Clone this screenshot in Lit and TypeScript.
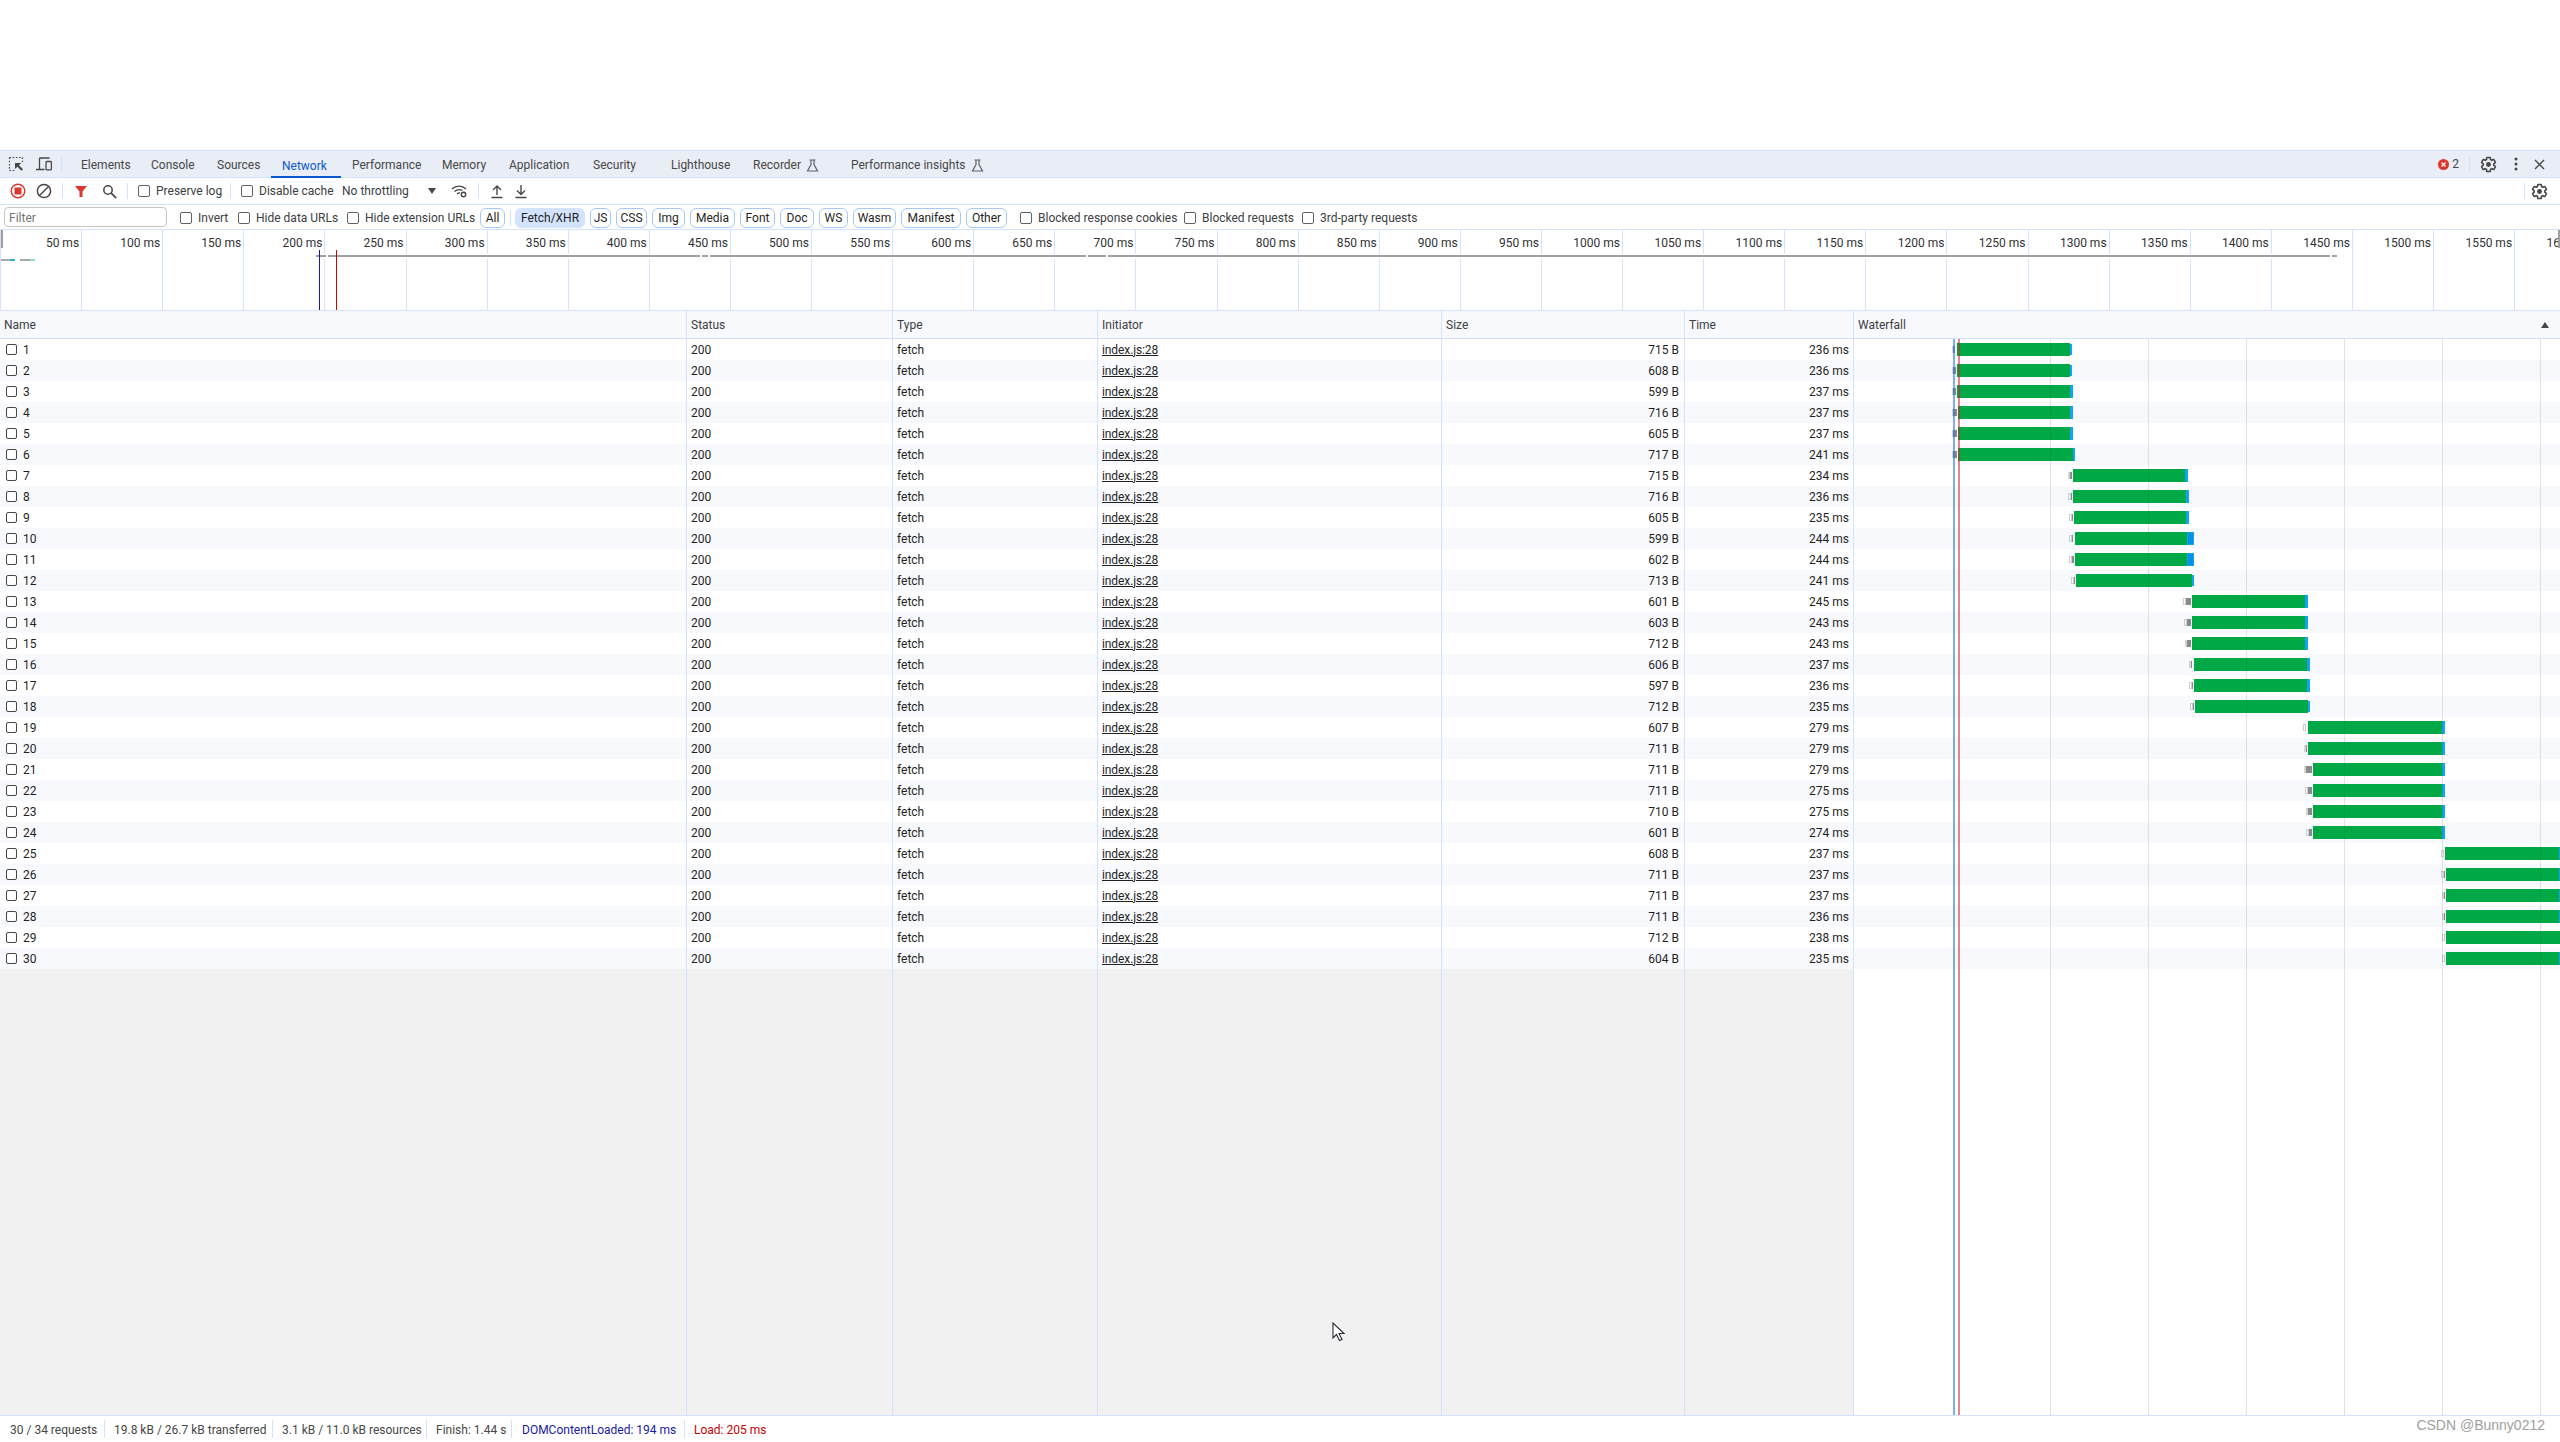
import { LitElement, html, css, svg } from 'lit';
import { customElement } from 'lit/decorators.js';

const WF_LEFT = 1854;

const tabs = [
  { label: 'Elements', w: 70 },
  { label: 'Console', w: 66 },
  { label: 'Sources', w: 65 },
  { label: 'Network', w: 70, active: true },
  { label: 'Performance', w: 90 },
  { label: 'Memory', w: 67 },
  { label: 'Application', w: 84 },
  { label: 'Security', w: 78 },
  { label: 'Lighthouse', w: 82 },
  { label: 'Recorder', w: 98, flask: true },
  { label: 'Performance insights', w: 150, flask: true },
];

const chips = [
  { label: 'JS', w: 21 },
  { label: 'CSS', w: 31 },
  { label: 'Img', w: 33 },
  { label: 'Media', w: 45 },
  { label: 'Font', w: 35 },
  { label: 'Doc', w: 34 },
  { label: 'WS', w: 29 },
  { label: 'Wasm', w: 43 },
  { label: 'Manifest', w: 60 },
  { label: 'Other', w: 41 },
];

const sizes = [715, 608, 599, 716, 605, 717, 715, 716, 605, 599, 602, 713, 601, 603, 712, 606, 597, 712, 607, 711, 711, 711, 710, 601, 608, 711, 711, 711, 712, 604];
const times = [236, 236, 237, 237, 237, 241, 234, 236, 235, 244, 244, 241, 245, 243, 243, 237, 236, 235, 279, 279, 279, 275, 275, 274, 237, 237, 237, 236, 238, 235];

// queue start, dark start, dark end, green start, blue start, end, kind of queue box, flag
type Bar = [number, number, number, number, number, number, 'o' | 's', string?];
const bars: Bar[] = [
  [1952, 1953, 1955, 1957, 2070, 2072, 's', 'inset'],
  [1952, 1953, 1956, 1957, 2070, 2072, 's', 'inset'],
  [1952, 1953, 1956, 1957, 2070, 2073, 's'],
  [1952, 1953, 1957, 1958, 2070, 2073, 's'],
  [1952, 1953, 1957, 1958, 2070, 2073, 's'],
  [1952, 1953, 1957, 1958, 2073, 2075, 's'],
  [2068, 2070, 2072, 2073, 2185, 2188, 's'],
  [2068, 2071, 2072, 2073, 2186, 2189, 'o'],
  [2069, 2072, 2073, 2074, 2186, 2189, 'o'],
  [2069, 2072, 2073, 2075, 2187, 2194, 'o', 'deep'],
  [2069, 2072, 2074, 2075, 2187, 2194, 'o', 'deep'],
  [2071, 2074, 2075, 2076, 2192, 2194, 'o', 'inset'],
  [2183, 2186, 2191, 2192, 2305, 2308, 'o'],
  [2184, 2187, 2191, 2192, 2305, 2308, 'o'],
  [2185, 2187, 2191, 2192, 2305, 2308, 's'],
  [2189, 2191, 2192, 2194, 2307, 2310, 's'],
  [2189, 2192, 2193, 2194, 2307, 2310, 'o'],
  [2190, 2193, 2194, 2195, 2308, 2310, 'o', 'inset'],
  [2303, 2306, 2306, 2308, 2442, 2445, 'o'],
  [2304, 2306, 2307, 2308, 2442, 2445, 's'],
  [2304, 2306, 2312, 2313, 2442, 2445, 's'],
  [2305, 2308, 2312, 2313, 2442, 2445, 'o'],
  [2306, 2308, 2312, 2313, 2442, 2445, 's'],
  [2306, 2309, 2312, 2313, 2442, 2445, 'o'],
  [2441, 2444, 2444, 2445, 2559, 2560, 'o'],
  [2441, 2444, 2445, 2446, 2559, 2560, 'o'],
  [2442, 2444, 2445, 2446, 2559, 2560, 's'],
  [2442, 2444, 2445, 2446, 2559, 2560, 's'],
  [2442, 2445, 2445, 2446, 2560, 2560, 'o'],
  [2442, 2445, 2445, 2446, 2559, 2560, 'o'],
];

const overviewBar = [[316, 326], [328, 700], [702, 708], [710, 1086], [1088, 1106], [1108, 2330], [2332, 2337]];
const overviewTicks = Array.from({ length: 32 }, (_, i) => i + 1);
const waterfallLines = [2050, 2148, 2246, 2344, 2442, 2540];

const gearPath = 'M19.43 12.98c.04-.32.07-.64.07-.98s-.03-.66-.07-.98l2.11-1.65c.19-.15.24-.42.12-.64l-2-3.46c-.12-.22-.39-.3-.61-.22l-2.49 1c-.52-.4-1.08-.73-1.69-.98l-.38-2.65C14.46 2.18 14.25 2 14 2h-4c-.25 0-.46.18-.49.42l-.38 2.65c-.61.25-1.17.59-1.69.98l-2.49-1c-.23-.09-.49 0-.61.22l-2 3.46c-.13.22-.07.49.12.64l2.11 1.65c-.04.32-.07.65-.07.98s.03.66.07.98l-2.11 1.65c-.19.15-.24.42-.12.64l2 3.46c.12.22.39.3.61.22l2.49-1c.52.4 1.08.73 1.69.98l.38 2.65c.03.24.24.42.49.42h4c.25 0 .46-.18.49-.42l.38-2.65c.61-.25 1.17-.59 1.69-.98l2.49 1c.23.09.49 0 .61-.22l2-3.46c.12-.22.07-.49-.12-.64l-2.11-1.65z';

const icon = (size: number, body: unknown) => html`<svg width=${size} height=${size} viewBox="0 0 16 16">${body}</svg>`;

const gear = () => html`<svg width="17" height="17" viewBox="0 0 24 24"><path d=${gearPath} fill="none" stroke="#474747" stroke-width="2.2"/><circle cx="12" cy="12" r="3.4" fill="#474747"/></svg>`;

const flask = () => html`<svg class="flask" width="13" height="13" viewBox="0 0 13 13"><path d="M3.5 1h6M5 1v4.5L1.5 12h10L8 5.5V1" fill="none" stroke="#5f6368" stroke-width="1.2"/></svg>`;

@customElement('app-root')
export class AppRoot extends LitElement {
  static styles = css`
    :host {
      display: block;
      position: relative;
      width: 2560px;
      height: 1442px;
      overflow: hidden;
      background: #fff;
      font-family: Roboto, "Liberation Sans", sans-serif;
      font-size: 12px;
      color: #303134;
    }
    .devtools {
      display: flex;
      flex-direction: column;
      height: 100%;
      padding-top: 150px;
      box-sizing: border-box;
    }
    .tabbar {
      display: flex;
      align-items: center;
      height: 28px;
      box-sizing: border-box;
      background: #e9edf6;
      border-top: 1px solid #d3e3fd;
      border-bottom: 1px solid #d3e3fd;
      color: #474747;
    }
    .tabbar-tools {
      display: flex;
      align-items: center;
      width: 70px;
      flex: none;
    }
    .tabbar-tools svg:first-child { margin-left: 8px; }
    .tabbar-tools svg + svg { margin-left: 12px; }
    .tabbar-tools .sep { margin-left: 9px; }
    .tab {
      flex: none;
      display: flex;
      align-items: center;
      box-sizing: border-box;
      height: 27px;
      padding-left: 11px;
      padding-top: 2px;
      white-space: nowrap;
    }
    .tab.active {
      color: #0b57d0;
      border-bottom: 2px solid #0b57d0;
      padding-top: 4px;
      margin-bottom: -1px;
    }
    .flask { margin-left: 5px; }
    .tabbar-right {
      margin-left: auto;
      display: flex;
      align-items: center;
      padding-right: 15px;
    }
    .errors {
      display: flex;
      align-items: center;
      gap: 3px;
      font-size: 12px;
      margin-right: 10px;
    }
    .tabbar-right .gear { margin: 0 17px 0 10px; display: flex; }
    .tabbar-right .dots { margin-right: 16px; display: flex; }
    .sep {
      flex: none;
      width: 1px;
      height: 16px;
      background: #d3e3fd;
    }
    .toolbar {
      display: flex;
      align-items: center;
      height: 27px;
      box-sizing: border-box;
      border-bottom: 1px solid #d3e3fd;
      padding-left: 5px;
    }
    .btn {
      flex: none;
      width: 26px;
      height: 20px;
      display: flex;
      align-items: center;
      justify-content: center;
    }
    .btn.search { margin-left: 2px; }
    .toolbar .sep { margin: 0 5px; }
    .check {
      flex: none;
      display: flex;
      align-items: center;
      gap: 6px;
      white-space: nowrap;
      color: #3c4043;
    }
    .box {
      flex: none;
      width: 10px;
      height: 10px;
      border: 1px solid #5f6368;
      border-radius: 2px;
      background: #fff;
    }
    .toolbar .check { margin-left: 5px; }
    .select {
      flex: none;
      display: flex;
      align-items: center;
      width: 86px;
      margin-left: 11px;
      color: #3c4043;
      white-space: nowrap;
    }
    .arrow {
      flex: none;
      margin-right: 15px;
      width: 0;
      height: 0;
      border-left: 4px solid transparent;
      border-right: 4px solid transparent;
      border-top: 6px solid #474747;
    }
    .toolbar .wifi { display: flex; margin-right: 5px; }
    .toolbar .load { display: flex; margin-left: 6px; }
    .toolbar .load + .load { margin-left: 10px; }
    .toolbar .right {
      margin-left: auto;
      display: flex;
      align-items: center;
      padding-right: 12px;
    }
    .toolbar .right .sep { margin: 0 6px 0 0; }
    .filterbar {
      display: flex;
      align-items: center;
      height: 24px;
      box-sizing: border-box;
      padding-left: 4px;
      padding-top: 2px;
    }
    .filter-input {
      flex: none;
      width: 163px;
      height: 20px;
      box-sizing: border-box;
      border: 1px solid #c4c7c5;
      border-radius: 4px;
      padding-left: 4px;
      padding-top: 2px;
      margin-top: -2px;
      margin-right: 13px;
      display: flex;
      align-items: center;
      color: #70757a;
    }
    .chip {
      flex: none;
      height: 20px;
      box-sizing: border-box;
      border: 1px solid #a8c7fa;
      border-radius: 6px;
      display: flex;
      align-items: center;
      justify-content: center;
      color: #1f1f1f;
      white-space: nowrap;
    }
    .chips { display: flex; gap: 5px; margin-right: 13px; }
    .chip.selected { background: #d3e3fd; border-color: #d3e3fd; margin-left: 4px; }
    .filterbar .sep { margin-left: 5px; }
    .overview {
      position: relative;
      flex: none;
      height: 82px;
      box-sizing: border-box;
      border-top: 1px solid #d3e3fd;
      border-bottom: 1px solid #d3e3fd;
      border-left: 1px solid #d3e3fd;
      overflow: hidden;
    }
    .ov-line {
      position: absolute;
      top: 0;
      bottom: 0;
      width: 1px;
      background: #d3e3fd;
    }
    .ov-label {
      position: absolute;
      top: 6px;
      width: 78px;
      text-align: right;
      white-space: nowrap;
      color: #303134;
    }
    .ov-strip {
      position: absolute;
      top: 24px;
      height: 5px;
      background: #fff;
    }
    .ov-seg {
      position: absolute;
      top: 25px;
      height: 2px;
      background: #a0a0a0;
    }
    .ov-mini {
      position: absolute;
      top: 29px;
      height: 2px;
    }
    .ov-mark {
      position: absolute;
      top: 20px;
      bottom: 0;
      width: 1px;
    }
    .ov-handle {
      position: absolute;
      top: 0;
      width: 2px;
      height: 18px;
      background: #a0a0a0;
    }
    .grid {
      display: grid;
      grid-template-columns: 687px 206px 205px 344px 243px 169px 1fr;
    }
    .grid > div {
      box-sizing: border-box;
      border-right: 1px solid #d3e3fd;
      padding: 0 4px;
      display: flex;
      align-items: center;
      white-space: nowrap;
      min-width: 0;
    }
    .grid > div:last-child { border-right: none; }
    .header {
      flex: none;
      height: 27px;
      background: #f8f9fd;
      border-bottom: 1px solid #d3e3fd;
      color: #3c4043;
    }
    .header .sort { justify-content: space-between; padding-right: 11px; }
    .tri {
      width: 0;
      height: 0;
      border-left: 4px solid transparent;
      border-right: 4px solid transparent;
      border-bottom: 6px solid #474747;
    }
    .body {
      position: relative;
      flex: 1;
      min-height: 0;
      display: flex;
      flex-direction: column;
    }
    .row {
      flex: none;
      height: 21px;
      background: #fff;
      color: #1f1f1f;
    }
    .row.alt { background: #f8f9fd; }
    .row .num { justify-content: flex-end; }
    .row .size { padding-right: 5px; }
    .row .name { padding-left: 6px; gap: 6px; }
    .row .name .box { width: 9px; height: 9px; border-color: #474747; }
    .link { text-decoration: underline; letter-spacing: -0.1px; }
    .filler {
      flex: 1;
      background: #f1f1f1;
    }
    .filler > div:last-child { background: #fff; }
    .waterfall {
      position: absolute;
      top: 0;
      right: 0;
      bottom: 0;
      left: ${WF_LEFT}px;
      overflow: hidden;
    }
    .wf-line {
      position: absolute;
      top: 0;
      bottom: 0;
      width: 1px;
      background: rgba(60, 64, 67, 0.15);
      z-index: 2;
    }
    .wf-mark {
      position: absolute;
      top: 0;
      bottom: 0;
      width: 2px;
      z-index: 2;
    }
    .wf-mark.dom { background: rgba(43, 120, 220, 0.6); }
    .wf-mark.load { background: rgba(200, 40, 40, 0.55); }
    .seg { position: absolute; }
    .seg.green { height: 13px; margin-top: 4px; background: #00a846; }
    .seg.blue { height: 13px; margin-top: 4px; background: #0ca6f5; }
    .seg.blue.inset { height: 11px; margin-top: 5px; }
    .seg.blue.deep { background: #0a8ee6; box-shadow: inset 0 0 0 1px #0ca6f5; }
    .seg.dark { height: 7px; margin-top: 7px; background: #8a8a8a; }
    .seg.queue { height: 7px; margin-top: 7px; box-sizing: border-box; background: #d4d4d4; }
    .seg.queue.o { background: transparent; border: 1px solid #cdcdcd; }
    .statusbar {
      flex: none;
      display: flex;
      align-items: center;
      height: 27px;
      box-sizing: border-box;
      border-top: 1px solid #d3e3fd;
      background: #fff;
      padding-left: 1px;
      color: #474747;
    }
    .stat {
      flex: none;
      box-sizing: border-box;
      height: 18px;
      line-height: 20px;
      padding-left: 9px;
      border-right: 1px solid #d3e3fd;
      white-space: nowrap;
    }
    .stat:last-child { border-right: none; }
    .stat.dcl { color: #1a1aa6; padding-left: 10px; }
    .stat.loaded { color: #c80000; }
    .watermark {
      position: absolute;
      right: 15px;
      bottom: 9px;
      font-family: "Liberation Sans", Arial, sans-serif;
      font-size: 14px;
      color: #a0a0a0;
    }
    .cursor {
      position: absolute;
      left: 1332px;
      top: 1322px;
    }
  `;

  renderTabBar() {
    return html`
      <div class="tabbar">
        <div class="tabbar-tools">
          ${icon(16, svg`<path d="M1.5 1.5h13M1.5 1.5v13M1.5 14.5h6M14.5 1.5v4.5" stroke="#474747" stroke-width="1.2" stroke-dasharray="1.6 1.6" fill="none"/><path d="M7 7h6.2l-2.2 2.2 4 4-1.6 1.6-4-4L7 13z" fill="#474747"/>`)}
          ${icon(16, svg`<path d="M3.5 2h10M3.5 2v11M0 13.5h8.5" stroke="#474747" stroke-width="1.3" fill="none"/><rect x="10" y="5.5" width="5.4" height="8.4" rx="1" fill="none" stroke="#474747" stroke-width="1.3"/>`)}
          <span class="sep"></span>
        </div>
        ${tabs.map(t => html`
          <div class="tab ${t.active ? 'active' : ''}" style="width:${t.w}px">${t.label}${t.flask ? flask() : ''}</div>
        `)}
        <div class="tabbar-right">
          <div class="errors">
            <svg width="11" height="11" viewBox="0 0 11 11"><circle cx="5.5" cy="5.5" r="5.5" fill="#dc362e"/><path d="M3.5 3.5l4 4M7.5 3.5l-4 4" stroke="#fff" stroke-width="1.2"/></svg>
            <span>2</span>
          </div>
          <span class="sep"></span>
          <span class="gear">${gear()}</span>
          <span class="dots">
            <svg width="4" height="14" viewBox="0 0 4 14"><circle cx="2" cy="2" r="1.5" fill="#474747"/><circle cx="2" cy="7" r="1.5" fill="#474747"/><circle cx="2" cy="12" r="1.5" fill="#474747"/></svg>
          </span>
          <svg width="11" height="11" viewBox="0 0 11 11"><path d="M1 1l9 9M10 1l-9 9" stroke="#474747" stroke-width="1.3"/></svg>
        </div>
      </div>
    `;
  }

  renderToolbar() {
    return html`
      <div class="toolbar">
        <div class="btn">
          <svg width="16" height="16" viewBox="0 0 16 16"><circle cx="8" cy="8" r="6.8" fill="none" stroke="#dc362e" stroke-width="1.4"/><rect x="4.5" y="4.5" width="7" height="7" rx="1" fill="#dc362e"/></svg>
        </div>
        <div class="btn">
          <svg width="16" height="16" viewBox="0 0 16 16"><circle cx="8" cy="8" r="6.6" fill="none" stroke="#474747" stroke-width="1.5"/><path d="M12.5 3.5l-9 9" stroke="#474747" stroke-width="1.5"/></svg>
        </div>
        <span class="sep"></span>
        <div class="btn">
          <svg width="14" height="14" viewBox="0 0 14 14"><path d="M1 2h12L8.5 7.5V13h-3V7.5z" fill="#dc362e"/></svg>
        </div>
        <div class="btn search">
          <svg width="15" height="15" viewBox="0 0 15 15"><circle cx="6" cy="6" r="4.2" fill="none" stroke="#474747" stroke-width="1.5"/><path d="M9.2 9.2l5 5" stroke="#474747" stroke-width="1.7"/></svg>
        </div>
        <span class="sep"></span>
        <label class="check" style="width:87px"><span class="box"></span>Preserve log</label>
        <span class="sep"></span>
        <label class="check" style="width:90px"><span class="box"></span>Disable cache</label>
        <div class="select">No throttling</div>
        <span class="arrow"></span>
        <span class="wifi">
          <svg width="17" height="14" viewBox="0 0 17 14"><path d="M1 5a10 10 0 0 1 14 0M3.5 7.5a7 7 0 0 1 8 -1M6 10a3.5 3.5 0 0 1 3 -1" fill="none" stroke="#474747" stroke-width="1.3"/><circle cx="12.5" cy="10.5" r="2.2" fill="none" stroke="#474747" stroke-width="1.4"/></svg>
        </span>
        <span class="sep"></span>
        <span class="load">
          <svg width="14" height="15" viewBox="0 0 14 15"><path d="M7 11V2M3 6l4-4 4 4M1.5 13.5h11" fill="none" stroke="#474747" stroke-width="1.4"/></svg>
        </span>
        <span class="load">
          <svg width="14" height="15" viewBox="0 0 14 15"><path d="M7 1v9M3 6.5l4 4 4-4M1.5 13.5h11" fill="none" stroke="#474747" stroke-width="1.4"/></svg>
        </span>
        <div class="right"><span class="sep"></span>${gear()}</div>
      </div>
    `;
  }

  renderFilterBar() {
    return html`
      <div class="filterbar">
        <div class="filter-input">Filter</div>
        <label class="check" style="width:58px"><span class="box"></span>Invert</label>
        <label class="check" style="width:109px"><span class="box"></span>Hide data URLs</label>
        <label class="check" style="width:133px"><span class="box"></span>Hide extension URLs</label>
        <div class="chip" style="width:25px">All</div>
        <span class="sep"></span>
        <div class="chip selected" style="width:70px;margin-right:5px">Fetch/XHR</div>
        <div class="chips">
          ${chips.map(c => html`<div class="chip" style="width:${c.w}px">${c.label}</div>`)}
        </div>
        <label class="check" style="width:164px"><span class="box"></span>Blocked response cookies</label>
        <label class="check" style="width:118px"><span class="box"></span>Blocked requests</label>
        <label class="check"><span class="box"></span>3rd-party requests</label>
      </div>
    `;
  }

  renderOverview() {
    return html`
      <div class="overview">
        ${overviewTicks.map(i => {
          const x = i * 81.1 - 1;
          return html`
            <div class="ov-line" style="left:${x}px"></div>
            <div class="ov-label" style="left:${x - 80}px">${i * 50} ms</div>
          `;
        })}
        <div class="ov-strip" style="left:315px;width:2022px"></div>
        ${overviewBar.map(([a, b]) => html`<div class="ov-seg" style="left:${a - 1}px;width:${b - a}px"></div>`)}
        <div class="ov-mini" style="left:0;width:9px;background:#a8a8a8"></div>
        <div class="ov-mini" style="left:9px;width:5px;background:#2bb3dc"></div>
        <div class="ov-mini" style="left:19px;width:10px;background:#a8a8a8"></div>
        <div class="ov-mini" style="left:29px;width:5px;background:#8fe0c8"></div>
        <div class="ov-mark" style="left:318px;background:#1a1a9c"></div>
        <div class="ov-mark" style="left:335px;background:#d00000"></div>
        <div class="ov-handle" style="left:0"></div>
        <div class="ov-handle" style="right:0"></div>
      </div>
    `;
  }

  renderBar(b: Bar, row: number) {
    const [q, d, de, g, bs, e, kind, flag] = b;
    const top = row * 21;
    return html`
      <div class="seg queue ${kind}" style="left:${q - WF_LEFT}px;width:${d - q}px;top:${top}px"></div>
      ${de > d ? html`<div class="seg dark" style="left:${d - WF_LEFT}px;width:${de - d}px;top:${top}px"></div>` : ''}
      <div class="seg green" style="left:${g - WF_LEFT}px;width:${bs - g}px;top:${top}px"></div>
      ${e > bs ? html`<div class="seg blue ${flag ?? ''}" style="left:${bs - WF_LEFT}px;width:${e - bs}px;top:${top}px"></div>` : ''}
    `;
  }

  renderTable() {
    return html`
      <div class="header grid">
        <div>Name</div><div>Status</div><div>Type</div><div>Initiator</div><div>Size</div><div>Time</div>
        <div class="sort"><span>Waterfall</span><span class="tri"></span></div>
      </div>
      <div class="body">
        ${sizes.map((size, i) => html`
          <div class="row grid ${i % 2 ? 'alt' : ''}">
            <div class="name"><span class="box"></span>${i + 1}</div>
            <div>200</div>
            <div>fetch</div>
            <div><span class="link">index.js:28</span></div>
            <div class="num size">${size} B</div>
            <div class="num">${times[i]} ms</div>
            <div></div>
          </div>
        `)}
        <div class="filler grid"><div></div><div></div><div></div><div></div><div></div><div></div><div></div></div>
        <div class="waterfall">
          ${bars.map((b, i) => this.renderBar(b, i))}
          ${waterfallLines.map(x => html`<div class="wf-line" style="left:${x - WF_LEFT}px"></div>`)}
          <div class="wf-mark dom" style="left:${1953 - WF_LEFT}px"></div>
          <div class="wf-mark load" style="left:${1958 - WF_LEFT}px"></div>
        </div>
      </div>
    `;
  }

  renderStatusBar() {
    return html`
      <div class="statusbar">
        <div class="stat" style="width:104px">30 / 34 requests</div>
        <div class="stat" style="width:168px">19.8 kB / 26.7 kB transferred</div>
        <div class="stat" style="width:154px">3.1 kB / 11.0 kB resources</div>
        <div class="stat" style="width:85px">Finish: 1.44 s</div>
        <div class="stat dcl" style="width:173px">DOMContentLoaded: 194 ms</div>
        <div class="stat loaded">Load: 205 ms</div>
      </div>
    `;
  }

  render() {
    return html`
      <div class="devtools">
        ${this.renderTabBar()}
        ${this.renderToolbar()}
        ${this.renderFilterBar()}
        ${this.renderOverview()}
        ${this.renderTable()}
        ${this.renderStatusBar()}
      </div>
      <div class="watermark">CSDN @Bunny0212</div>
      <svg class="cursor" width="14" height="20" viewBox="0 0 14 20"><path d="M1 1v15l3.5-3.5 3 6 2.5-1-3-6h5z" fill="#fff" stroke="#2a2a35" stroke-width="1.1"/></svg>
    `;
  }
}
